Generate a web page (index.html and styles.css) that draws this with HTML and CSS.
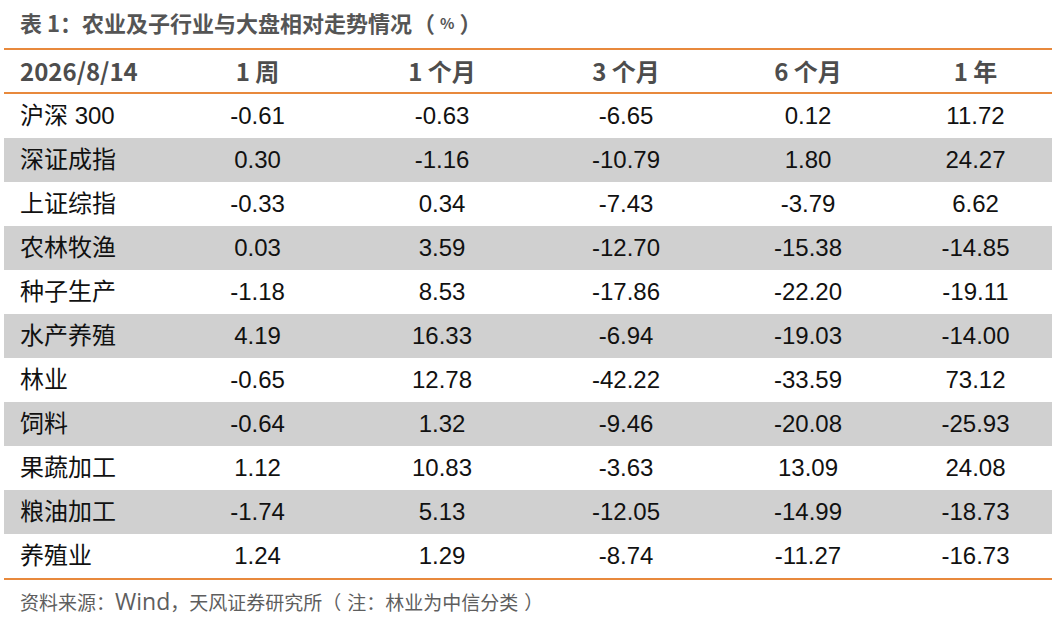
FILE: index.html
```html
<!DOCTYPE html>
<html lang="zh-CN">
<head>
<meta charset="utf-8">
<title>表 1：农业及子行业与大盘相对走势情况</title>
<link rel="stylesheet" href="styles.css">
</head>
<body>
<div class="page">
  <h1 class="title">表 1：农业及子行业与大盘相对走势情况<span class="punct">（</span><span class="pct">%</span><span class="punct">）</span></h1>
  <table class="perf">
    <colgroup>
      <col class="c-name">
      <col class="c-w1">
      <col class="c-m1">
      <col class="c-m3">
      <col class="c-m6">
      <col class="c-y1">
    </colgroup>
    <thead>
      <tr>
        <th class="name">2026/8/14</th>
        <th>1 周</th>
        <th>1 个月</th>
        <th>3 个月</th>
        <th>6 个月</th>
        <th>1 年</th>
      </tr>
    </thead>
    <tbody>
      <tr><td class="name">沪深 300</td><td>-0.61</td><td>-0.63</td><td>-6.65</td><td>0.12</td><td>11.72</td></tr>
      <tr class="shade"><td class="name">深证成指</td><td>0.30</td><td>-1.16</td><td>-10.79</td><td>1.80</td><td>24.27</td></tr>
      <tr><td class="name">上证综指</td><td>-0.33</td><td>0.34</td><td>-7.43</td><td>-3.79</td><td>6.62</td></tr>
      <tr class="shade"><td class="name">农林牧渔</td><td>0.03</td><td>3.59</td><td>-12.70</td><td>-15.38</td><td>-14.85</td></tr>
      <tr><td class="name">种子生产</td><td>-1.18</td><td>8.53</td><td>-17.86</td><td>-22.20</td><td>-19.11</td></tr>
      <tr class="shade"><td class="name">水产养殖</td><td>4.19</td><td>16.33</td><td>-6.94</td><td>-19.03</td><td>-14.00</td></tr>
      <tr><td class="name">林业</td><td>-0.65</td><td>12.78</td><td>-42.22</td><td>-33.59</td><td>73.12</td></tr>
      <tr class="shade"><td class="name">饲料</td><td>-0.64</td><td>1.32</td><td>-9.46</td><td>-20.08</td><td>-25.93</td></tr>
      <tr><td class="name">果蔬加工</td><td>1.12</td><td>10.83</td><td>-3.63</td><td>13.09</td><td>24.08</td></tr>
      <tr class="shade"><td class="name">粮油加工</td><td>-1.74</td><td>5.13</td><td>-12.05</td><td>-14.99</td><td>-18.73</td></tr>
      <tr><td class="name">养殖业</td><td>1.24</td><td>1.29</td><td>-8.74</td><td>-11.27</td><td>-16.73</td></tr>
    </tbody>
  </table>
  <p class="source">资料来源：<span class="latin">Wind</span>，天风证券研究所<span class="punct open">（</span>注：林业为中信分类<span class="punct close">）</span></p>
</div>
</body>
</html>
```

FILE: styles.css
```css
html, body {
  margin: 0;
  padding: 0;
  background: #ffffff;
}

.page {
  width: 1057px;
  height: 618px;
  padding: 0 5px 0 4px;
  box-sizing: border-box;
  font-family: "Liberation Sans", "Noto Sans CJK SC", sans-serif;
}

.title {
  margin: 0;
  height: 48px;
  padding: 0 0 4px 16px;
  box-sizing: border-box;
  display: flex;
  align-items: center;
  font-family: "Noto Sans CJK SC", sans-serif;
  font-size: 22px;
  font-weight: 700;
  color: #555555;
  line-height: 1;
}

.punct {
  font-family: "Noto Sans CJK TC", "Noto Sans CJK SC", sans-serif;
}

.title .punct {
  padding: 0 1px;
}

.pct {
  font-size: 15px;
  padding: 0 4px;
}

.perf {
  width: 1048px;
  border-collapse: collapse;
  table-layout: fixed;
}

.c-name { width: 162px; }
.c-w1 { width: 183px; }
.c-m1 { width: 186px; }
.c-m3 { width: 182px; }
.c-m6 { width: 182px; }
.c-y1 { width: 153px; }

.perf thead tr {
  border-top: 2px solid #e8893c;
  border-bottom: 2px solid #e8893c;
}

.perf th {
  height: 42px;
  padding: 0;
  font-family: "Noto Sans CJK SC", sans-serif;
  font-size: 24px;
  font-weight: 700;
  color: #4d4d4d;
  text-align: center;
  vertical-align: middle;
  line-height: 1;
}

.perf td {
  height: 44px;
  padding: 0;
  font-size: 24px;
  color: #111111;
  text-align: center;
  vertical-align: middle;
  line-height: 1;
}

.perf .name {
  text-align: left;
  padding-left: 16px;
}

.perf tbody tr.shade {
  background: #d0d0d0;
}

.perf tbody tr:last-child {
  border-bottom: 2px solid #e8893c;
}

.source {
  margin: 0;
  padding: 10px 0 0 16px;
  font-family: "Noto Sans CJK SC", sans-serif;
  font-size: 19px;
  color: #5e5e5e;
  line-height: 1.2;
}

.source .latin {
  font-family: "Open Sans", sans-serif;
  font-size: 23px;
  line-height: 1;
}

.source .open {
  padding: 0 6px 0 0;
}

.source .close {
  padding: 0 0 0 6px;
}
```
